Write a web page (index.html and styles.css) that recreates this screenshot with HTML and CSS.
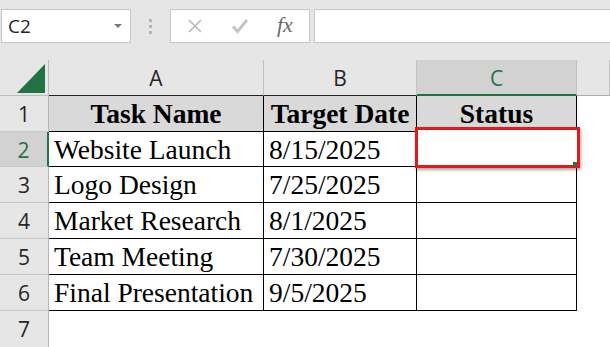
FILE: index.html
```html
<!DOCTYPE html>
<html lang="en">
<head>
  <meta charset="UTF-8" />
  <title>Task Status</title>
  <link rel="stylesheet" href="styles.css">
</head>
<body>

  <!-- formula bar -->
  <div class="toolbar">
    <div class="name-box">
      <span>C2</span>
      <span class="drop"></span>
    </div>
    <div class="grip"><i></i><i></i><i></i></div>
    <div class="fx-buttons">
      <svg width="16" height="16" viewBox="0 0 16 16"><path d="M2 2 L14 14 M14 2 L2 14" stroke="#b9b9b9" stroke-width="1.6" fill="none"/></svg>
      <svg width="18" height="16" viewBox="0 0 18 16"><path d="M2 8.5 L6.5 13.5 L16 2" stroke="#c4c4c4" stroke-width="3" fill="none"/></svg>
      <span class="fx">fx</span>
    </div>
    <div class="formula"></div>
  </div>

  <!-- sheet -->
  <div class="sheet">
    <div class="corner">
      <svg width="48" height="35" viewBox="0 0 48 35"><polygon points="45,4 45,33 17,33" fill="#217346"/></svg>
    </div>
    <div class="col-head dark">A</div>
    <div class="col-head dark">B</div>
    <div class="col-head active">C</div>
    <div class="col-head"></div>

    <div class="row-head">1</div>
    <div class="cell title">Task Name</div>
    <div class="cell title">Target Date</div>
    <div class="cell title">Status</div>
    <div class="blank"></div>

    <div class="row-head active">2</div>
    <div class="cell">Website Launch</div>
    <div class="cell">8/15/2025</div>
    <div class="cell selected">
      <div class="mark"></div>
      <div class="handle"></div>
    </div>
    <div class="blank"></div>

    <div class="row-head">3</div>
    <div class="cell">Logo Design</div>
    <div class="cell">7/25/2025</div>
    <div class="cell"></div>
    <div class="blank"></div>

    <div class="row-head">4</div>
    <div class="cell">Market Research</div>
    <div class="cell">8/1/2025</div>
    <div class="cell"></div>
    <div class="blank"></div>

    <div class="row-head">5</div>
    <div class="cell">Team Meeting</div>
    <div class="cell">7/30/2025</div>
    <div class="cell"></div>
    <div class="blank"></div>

    <div class="row-head">6</div>
    <div class="cell">Final Presentation</div>
    <div class="cell">9/5/2025</div>
    <div class="cell"></div>
    <div class="blank"></div>

    <div class="row-head last">7</div>
    <div class="blank"></div>
    <div class="blank"></div>
    <div class="blank"></div>
    <div class="blank"></div>
  </div>

</body>
</html>
```

FILE: styles.css
```css
  * {
    box-sizing: border-box;
  }

  body {
    margin: 0;
    width: 610px;
    height: 347px;
    overflow: hidden;
    background: #e6e6e6;
    font-family: "Open Sans", "Liberation Sans", sans-serif;
  }

  /* formula bar */
  .toolbar {
    display: flex;
    align-items: flex-start;
    height: 60px;
    padding: 9px 0 0 1px;
  }

  .name-box,
  .fx-buttons,
  .formula {
    height: 34px;
    background: #fff;
    border: 1px solid #c6c6c6;
  }

  .name-box {
    width: 130px;
    display: flex;
    align-items: center;
    justify-content: space-between;
    padding: 0 8px 0 6px;
    font-size: 19px;
    color: #262626;
  }

  .drop {
    width: 0;
    height: 0;
    border-left: 4px solid transparent;
    border-right: 4px solid transparent;
    border-top: 4px solid #7a7a7a;
  }

  .grip {
    width: 39px;
    height: 34px;
    display: flex;
    flex-direction: column;
    align-items: center;
    justify-content: center;
    gap: 3px;
  }

  .grip i {
    width: 3px;
    height: 3px;
    background: #b4b4b4;
  }

  .fx-buttons {
    width: 140px;
    display: flex;
    align-items: center;
    gap: 28px;
    padding-left: 16px;
  }

  .fx {
    font-family: "Liberation Serif", serif;
    font-style: italic;
    font-size: 22px;
    color: #6b6b6b;
    margin-top: -2px;
  }

  .formula {
    flex: 1;
    margin-left: 4px;
    margin-right: -4px;
  }

  /* sheet grid */
  .sheet {
    display: grid;
    grid-template-columns: 49px 215px 153px 160px 1fr;
    grid-template-rows: 36px 36px 35px 36px 36px 36px 36px;
    background: #fff;
  }

  .corner,
  .col-head,
  .row-head {
    background: #e6e6e6;
    color: #262626;
    font-size: 21px;
    line-height: 36px;
    text-align: center;
  }

  .corner {
    border-right: 1px solid #bcbcbc;
    border-bottom: 1px solid #bcbcbc;
  }

  .corner svg {
    display: block;
  }

  .col-head {
    border-right: 1px solid #c2c2c2;
    border-bottom: 1px solid #ababab;
    line-height: 37px;
  }

  .col-head.dark {
    border-bottom-color: #222;
  }

  .col-head.active {
    background: #d2d2d2;
    color: #217346;
    border-bottom: 2px solid #217346;
  }

  .col-head:last-child {
    border-right: none;
  }

  .row-head {
    border-right: 1px solid #b4b4b4;
    border-bottom: 1px solid #c8c8c8;
    line-height: 36px;
  }

  .row-head.active {
    background: #d2d2d2;
    color: #217346;
    border-right: 2px solid #217346;
  }

  .row-head.last {
    border-bottom: none;
  }

  .cell {
    font-family: "Liberation Serif", "Times New Roman", serif;
    font-size: 27.5px;
    line-height: 35px;
    color: #000;
    white-space: nowrap;
    padding-left: 5px;
    border-right: 1px solid #000;
    border-bottom: 1px solid #000;
  }

  .cell.title {
    background: #d9d9d9;
    font-weight: bold;
    text-align: center;
    padding-left: 0;
  }

  .blank {
    background: #fff;
  }

  /* selection marker around C2 */
  .selected {
    position: relative;
  }

  .mark {
    position: absolute;
    left: -2px;
    top: -5px;
    width: 165px;
    height: 41px;
    border: 3px solid #e01b1b;
    background: #fff;
    box-shadow: 1px 2px 3px rgba(0, 0, 0, 0.35);
  }

  .handle {
    position: absolute;
    left: 156px;
    top: 30px;
    width: 4px;
    height: 4px;
    background: #217346;
  }
```
